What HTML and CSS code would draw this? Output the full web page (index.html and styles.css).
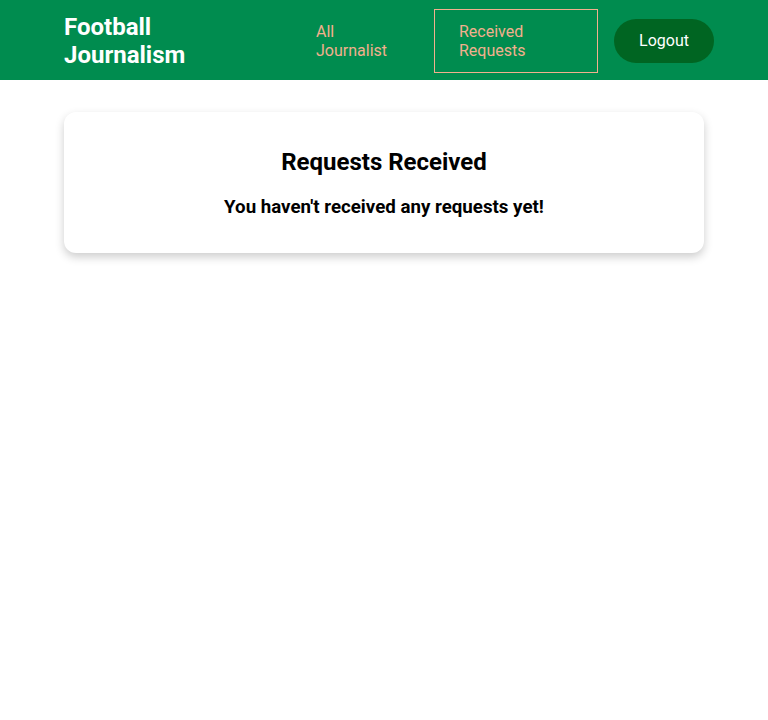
FILE: index.html
```html
<!DOCTYPE html>
<html lang="en">
<head>
<meta charset="utf-8">
<title>Received Requests</title>
<link rel="stylesheet" href="styles.css">
</head>
<body>
<header class="header">
  <div class="brand">Football Journalism</div>
  <nav class="nav">
    <a class="nav-link nav-all" href="#">All Journalist</a>
    <a class="nav-link nav-active" href="#">Received Requests</a>
    <a class="logout" href="#">Logout</a>
  </nav>
</header>
<main class="main">
  <section class="card">
    <h2 class="card-title">Requests Received</h2>
    <p class="card-text">You haven't received any requests yet!</p>
  </section>
</main>
</body>
</html>
```

FILE: styles.css
```css
* { box-sizing: border-box; }
body {
  margin: 0;
  font-family: Roboto, "Liberation Sans", sans-serif;
  background: #ffffff;
  color: #000;
}
.header {
  height: 80px;
  background: #008c4f;
  display: flex;
  align-items: center;
  justify-content: space-between;
  padding: 2px 54px 0 64px;
}
.brand {
  width: 150px;
  color: #ffffff;
  font-size: 24px;
  font-weight: 700;
  line-height: 28px;
}
.nav {
  display: flex;
  align-items: center;
  gap: 16px;
}
.nav-link {
  display: block;
  padding: 12px 24px;
  color: #f2b08e;
  font-size: 16px;
  line-height: 19px;
  text-decoration: none;
  border: 1px solid transparent;
}
.nav-all {
  width: 126px;
  padding-left: 23px;
}
.nav-active {
  width: 164px;
  border-color: #f2b08e;
}
.logout {
  display: block;
  width: 100px;
  padding: 12px 0;
  text-align: center;
  background: #006522;
  color: #ffffff;
  border-radius: 22px;
  font-size: 16px;
  line-height: 20px;
  text-decoration: none;
}
.main {
  padding: 32px 64px;
}
.card {
  background: #fff;
  border-radius: 12px;
  box-shadow: 0 4px 10px rgba(0, 0, 0, 0.2);
  padding: 36px 24px 35px;
  text-align: center;
}
.card-title {
  margin: 0 0 21px;
  font-size: 24px;
  line-height: 28px;
  font-weight: 700;
}
.card-text {
  margin: 0;
  font-size: 18.72px;
  line-height: 21px;
  font-weight: 700;
}
```
